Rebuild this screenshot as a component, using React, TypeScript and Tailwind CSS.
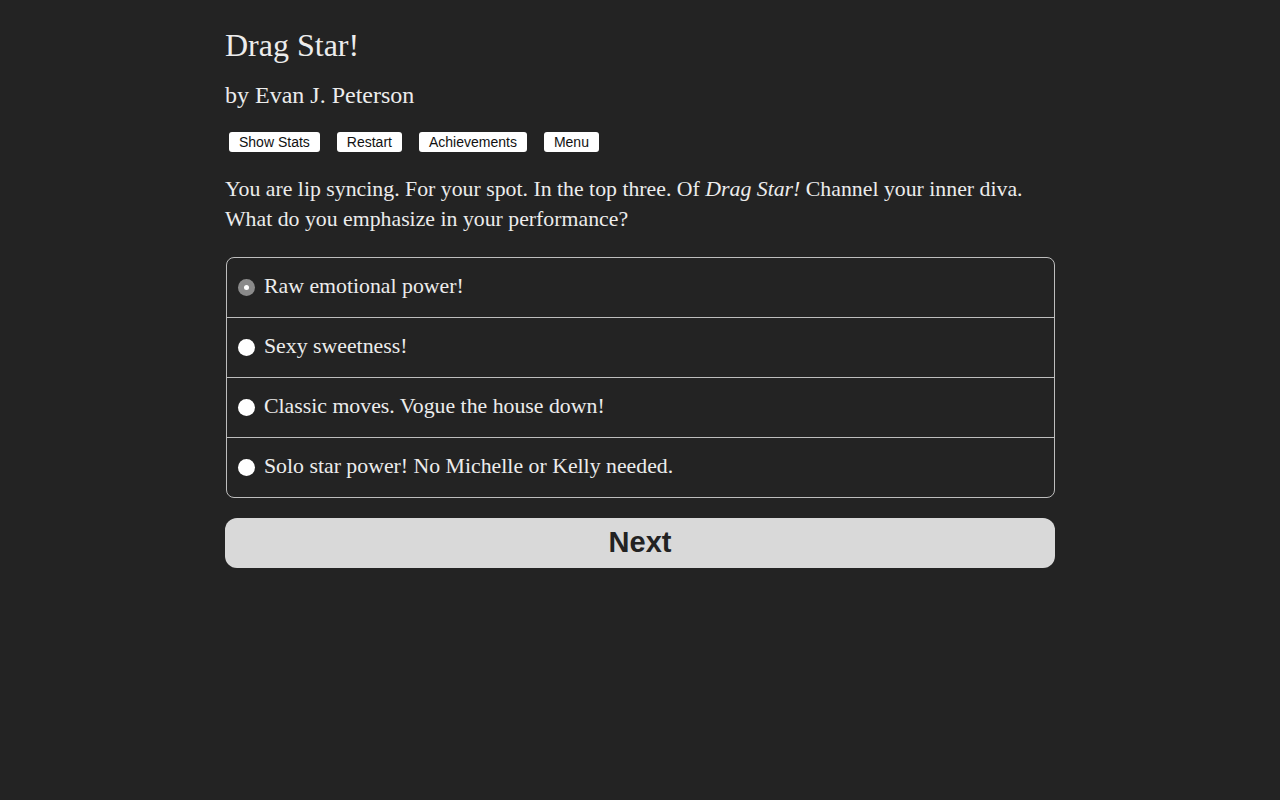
import React from "react";

const serif = { fontFamily: '"Liberation Serif", "Times New Roman", serif' };

export default function App() {
  const options = [
    "Raw emotional power!",
    "Sexy sweetness!",
    "Classic moves. Vogue the house down!",
    "Solo star power! No Michelle or Kelly needed.",
  ];
  return (
    <div className="min-h-[800px] w-full bg-[#232323] text-[#ececec]" style={serif}>
      <div className="ml-[225px] w-[830px] pt-[27px]">
        <h1 className="text-[32px] leading-[36px] font-normal">Drag Star!</h1>
        <h2 className="mt-[17px] text-[24px] leading-[30px] font-normal">by Evan J. Peterson</h2>
        <div className="mt-[22px] flex gap-[17px] pl-[4px] font-['Liberation_Sans',Arial,sans-serif]">
          {["Show Stats", "Restart", "Achievements", "Menu"].map((b) => (
            <button
              key={b}
              className="h-[20px] rounded-[3px] bg-white px-[10px] text-[14px] leading-[20px] text-[#111]"
            >
              {b}
            </button>
          ))}
        </div>
        <p className="mt-[22px] text-[21.8px] leading-[30px]">
          You are lip syncing. For your spot. In the top three. Of <i>Drag Star!</i> Channel your inner diva.
          <br />
          What do you emphasize in your performance?
        </p>
        <div className="mt-[23px] ml-[1px] overflow-hidden rounded-[8px] border border-[#bdbdbd]">
          {options.map((o, i) => (
            <div
              key={o}
              className={`flex items-center pl-[11px] pb-[3px] text-[21.8px] ${i > 0 ? "h-[60px] border-t border-[#bdbdbd]" : "h-[59px]"}`}
            >
              {i === 0 ? (
                <span className="mr-[9px] mt-[3px] flex h-[17px] w-[17px] shrink-0 items-center justify-center rounded-full bg-[#8a8a8a]">
                  <span className="h-[5px] w-[5px] rounded-full bg-white" />
                </span>
              ) : (
                <span className="mr-[9px] mt-[3px] h-[17px] w-[17px] shrink-0 rounded-full bg-white" />
              )}
              <span>{o}</span>
            </div>
          ))}
        </div>
        <button className="mt-[20px] flex h-[50px] w-[830px] items-center justify-center rounded-[12px] bg-[#d9d9d9] text-[29px] font-bold text-[#222] font-['Liberation_Sans',Arial,sans-serif]">
          Next
        </button>
      </div>
    </div>
  );
}
